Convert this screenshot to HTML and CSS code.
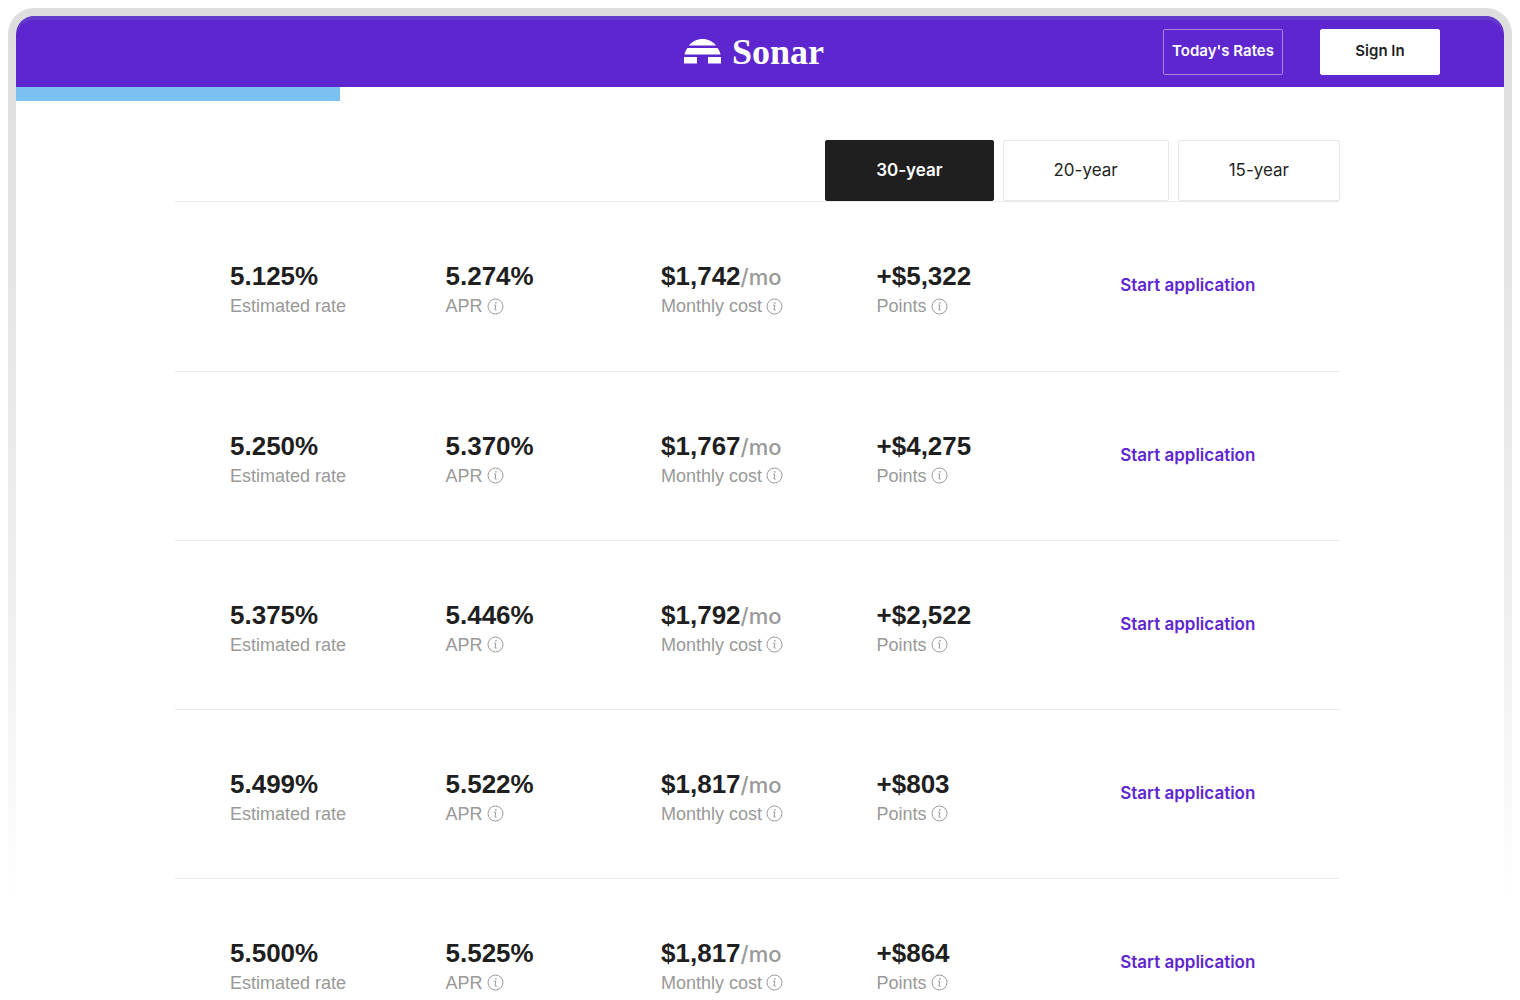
FILE: index.html
```html
<!DOCTYPE html>
<html lang="en">
<head>
    <meta charset="UTF-8">
    <meta name="viewport" content="width=device-width, initial-scale=1.0">
    <title>Sonar - Today's Rates</title>
    <link rel="stylesheet" href="styles.css">
    <script src="rates.js" defer></script>
</head>
<body>
    <div class="frame">
        <div class="page">
            <header class="header">
                <a class="logo" href="#">
                    <svg width="37" height="25" viewBox="0 0 37 25" fill="#fff" aria-hidden="true">
                        <path d="M5 6.500C8 2.500 13 0 18.500 0S29 2.500 32 6.500z"/>
                        <path d="M3.500 9H33.500C35 11 36 13 36.500 15.500H.5C1 13 2 11 3.500 9z"/>
                        <path d="M0 18H13V24.500H0zM24 18H37V24.500H24z"/>
                    </svg>
                    <span>Sonar</span>
                </a>
                <nav class="nav">
                    <button type="button" class="btn btn-outline">Today's Rates</button>
                    <button type="button" class="btn btn-solid">Sign In</button>
                </nav>
            </header>
            <div class="progress"><div class="progress-bar"></div></div>

            <main class="content">
                <div class="tabs">
                    <button type="button" class="tab active">30-year</button>
                    <button type="button" class="tab">20-year</button>
                    <button type="button" class="tab">15-year</button>
                </div>
                <table class="rates">
                    <colgroup>
                        <col class="col-value">
                        <col class="col-value">
                        <col class="col-value">
                        <col class="col-points">
                        <col>
                    </colgroup>
                    <tbody id="rates-body"></tbody>
                </table>
            </main>
        </div>
    </div>
</body>
</html>
```

FILE: styles.css
```css
* {
    box-sizing: border-box;
}

body {
    margin: 0;
    padding: 8px 8px 0;
    height: 100vh;
    overflow: hidden;
    background-color: #fff;
    color: #1f1f1f;
    font-family: Inter, "Liberation Sans", sans-serif;
}

button {
    font-family: inherit;
    cursor: pointer;
}

/* Grey frame that fades out down the page */
.frame {
    height: 100%;
    padding: 8px 8px 0;
    border-radius: 26px 26px 0 0;
    background: linear-gradient(#ddd 0, #e1e1e1 12%, #f0f0f0 62%, #fff 90%);
}

.page {
    height: 100%;
    overflow: hidden;
    border-radius: 18px 18px 0 0;
    background-color: #fff;
}

/* Header */
.header {
    display: grid;
    grid-template-columns: 1fr auto 1fr;
    align-items: center;
    height: 71px;
    padding: 0 64px 0 52px;
    border-radius: 18px 18px 0 0;
    background-color: #5e26ce;
    box-shadow: inset 0 4px 0 #633bc8;
}

.logo {
    grid-column: 2;
    display: flex;
    align-items: center;
    gap: 11px;
    color: #fff;
    font-family: "Liberation Serif", serif;
    font-size: 36px;
    font-weight: bold;
    line-height: 40px;
    text-decoration: none;
}

.nav {
    display: flex;
    justify-content: flex-end;
    gap: 37px;
}

.btn {
    width: 120px;
    height: 46px;
    padding: 0 0 2px;
    border: 1px solid #fff;
    border-radius: 2px;
    font-size: 15px;
    font-weight: 600;
    white-space: nowrap;
}

.btn-outline {
    border-color: #a586e4;
    background-color: transparent;
    color: #fff;
}

.btn-solid {
    background-color: #fff;
    color: #1f1f1f;
}

.progress {
    height: 14px;
}

.progress-bar {
    width: 22%;
    max-width: 324px;
    height: 100%;
    background-color: #7ac1f2;
}

/* Rates */
.content {
    padding: 39px 164px 0 159px;
}

.tabs {
    display: flex;
    justify-content: flex-end;
    gap: 9px;
    border-bottom: 1px solid #ebebeb;
}

.tab {
    height: 61px;
    padding: 0 50px 2px;
    border: 1px solid #e8e8e8;
    border-radius: 2px;
    background-color: #fff;
    color: #1f1f1f;
    font-size: 17px;
}

.tab.active {
    border-color: #1f1f1f;
    background-color: #1f1f1f;
    color: #fff;
    font-weight: 600;
}

.rates {
    width: 100%;
    table-layout: fixed;
    border-collapse: collapse;
}

.col-value {
    width: 18.5%;
}

.col-points {
    width: 21%;
}

.rates td {
    height: 169px;
    padding: 8px 0 0 55px;
    border-bottom: 1px solid #ebebeb;
    text-align: left;
    white-space: nowrap;
}

.rates td.action {
    padding: 0 0 2px 54px;
}

.value {
    font-family: "Liberation Sans", Arial, sans-serif;
    font-size: 26px;
    font-weight: bold;
    line-height: 32px;
}

.unit {
    color: #999;
    font-family: Inter, sans-serif;
    font-size: 22px;
    font-weight: 500;
    line-height: 22px;
}

.label {
    display: flex;
    align-items: center;
    gap: 4px;
    color: #999;
    font-family: "Liberation Sans", Arial, sans-serif;
    font-size: 18px;
    line-height: 28px;
}

.apply {
    color: #5e26ce;
    font-size: 17px;
    font-weight: 600;
    text-decoration: none;
}
```

FILE: rates.js
```js
const rates = [
    ['5.125%', '5.274%', '$1,742', '+$5,322'],
    ['5.250%', '5.370%', '$1,767', '+$4,275'],
    ['5.375%', '5.446%', '$1,792', '+$2,522'],
    ['5.499%', '5.522%', '$1,817', '+$803'],
    ['5.500%', '5.525%', '$1,817', '+$864']
];

const infoIcon = `
    <svg width="17" height="17" viewBox="0 0 17 17" fill="none" stroke="#999" aria-hidden="true">
        <circle cx="8.5" cy="8.5" r="7.5"/>
        <path d="M7 7.200H8.800L8 12H9.700"/>
        <circle cx="8.900" cy="4.900" r=".8" fill="#999" stroke="none"/>
    </svg>`;

function cell(value, label, unit, info) {
    return `
        <td>
            <div class="value">${value}${unit ? `<span class="unit">${unit}</span>` : ''}</div>
            <div class="label">${label}${info ? infoIcon : ''}</div>
        </td>`;
}

document.getElementById('rates-body').innerHTML = rates.map(([rate, apr, cost, points]) => `
    <tr>
        ${cell(rate, 'Estimated rate', '', false)}
        ${cell(apr, 'APR', '', true)}
        ${cell(cost, 'Monthly cost', '/mo', true)}
        ${cell(points, 'Points', '', true)}
        <td class="action"><a class="apply" href="#">Start application</a></td>
    </tr>`).join('');
```
